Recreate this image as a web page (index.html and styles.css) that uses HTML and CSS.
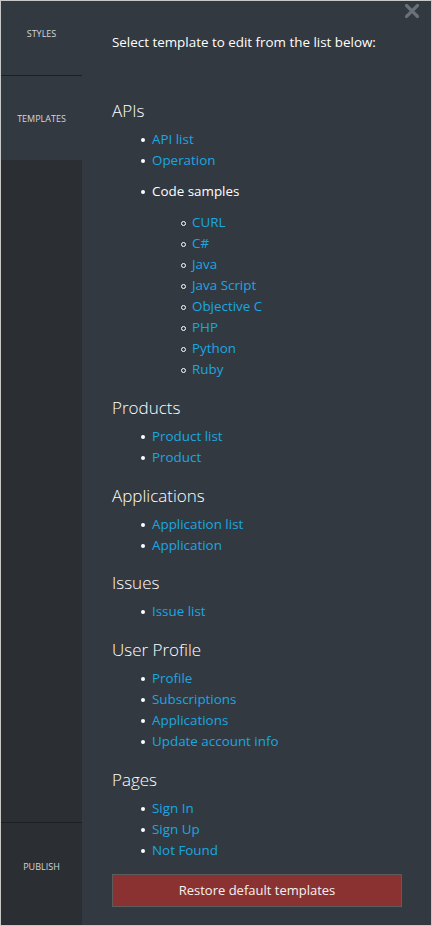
FILE: index.html
```html
<!DOCTYPE html>
<html>
<head>
<meta charset="utf-8">
<link rel="stylesheet" href="styles.css">
</head>
<body>
<div class="frame">
  <nav class="sidebar">
    <div class="tab tab-styles">STYLES</div>
    <div class="tab tab-templates">TEMPLATES</div>
    <div class="filler"></div>
    <div class="tab tab-publish">PUBLISH</div>
  </nav>
  <main class="main">
    <button class="close" aria-label="Close">
      <svg width="14" height="14" viewBox="0 0 14 14"><path d="M1.5 1.5 L12.5 12.5 M12.5 1.5 L1.5 12.5" stroke="#6b717a" stroke-width="3.2" stroke-linecap="square"/></svg>
    </button>
    <p class="intro">Select template to edit from the list below:</p>

    <h2 class="first">APIs</h2>
    <ul>
      <li><a href="#">API list</a></li>
      <li><a href="#">Operation</a></li>
      <li class="group">Code samples
        <ul class="sub">
          <li><a href="#">CURL</a></li>
          <li><a href="#">C#</a></li>
          <li><a href="#">Java</a></li>
          <li><a href="#">Java Script</a></li>
          <li><a href="#">Objective C</a></li>
          <li><a href="#">PHP</a></li>
          <li><a href="#">Python</a></li>
          <li><a href="#">Ruby</a></li>
        </ul>
      </li>
    </ul>

    <h2>Products</h2>
    <ul>
      <li><a href="#">Product list</a></li>
      <li><a href="#">Product</a></li>
    </ul>

    <h2>Applications</h2>
    <ul>
      <li><a href="#">Application list</a></li>
      <li><a href="#">Application</a></li>
    </ul>

    <h2>Issues</h2>
    <ul>
      <li><a href="#">Issue list</a></li>
    </ul>

    <h2>User Profile</h2>
    <ul>
      <li><a href="#">Profile</a></li>
      <li><a href="#">Subscriptions</a></li>
      <li><a href="#">Applications</a></li>
      <li><a href="#">Update account info</a></li>
    </ul>

    <h2>Pages</h2>
    <ul>
      <li><a href="#">Sign In</a></li>
      <li><a href="#">Sign Up</a></li>
      <li><a href="#">Not Found</a></li>
    </ul>

    <button class="restore">Restore default templates</button>
  </main>
</div>
</body>
</html>
```
FILE: styles.css
```css
html, body {
  margin: 0;
  padding: 0;
}
body {
  font-family: "Open Sans", "Liberation Sans", sans-serif;
  background: #ffffff;
}
.frame {
  box-sizing: border-box;
  width: 432px;
  height: 926px;
  border: 1px solid #c8c8c8;
  display: flex;
  background: #333941;
  overflow: hidden;
}
.sidebar {
  width: 81px;
  flex: none;
  display: flex;
  flex-direction: column;
}
.tab {
  display: flex;
  align-items: center;
  justify-content: center;
  font-size: 9px;
  color: #d4d6d9;
}
.tab-styles {
  height: 75px;
  padding-bottom: 10px;
  box-sizing: border-box;
  border-bottom: 1px solid #1c1f23;
}
.tab-templates {
  height: 84px;
  padding-top: 1px;
  box-sizing: border-box;
}
.filler {
  flex: 1;
  background: #2b2e33;
}
.tab-publish {
  height: 103px;
  box-sizing: border-box;
  background: #2b2e33;
  border-top: 1px solid #1c1f23;
  padding-bottom: 16px;
}
.main {
  flex: 1;
  position: relative;
  padding: 0 0 0 30px;
  color: #ffffff;
}
.close {
  position: absolute;
  top: 3px;
  right: 12px;
  width: 14px;
  height: 14px;
  padding: 0;
  border: 0;
  background: none;
  display: block;
}
.close svg {
  display: block;
}
.intro {
  margin: 31px 0 0 0;
  font-size: 13.4px;
  line-height: 21px;
  color: #ffffff;
}
h2 {
  margin: 15.75px 0 6px 0;
  font-size: 17px;
  font-weight: 300;
  line-height: 24px;
  color: #ffffff;
}
h2.first {
  margin-top: 46px;
}
ul {
  margin: 0;
  padding: 0 0 0 40px;
  list-style: none;
}
li {
  position: relative;
  font-size: 13.4px;
  line-height: 21px;
  color: #ffffff;
}
li::before {
  content: "";
  position: absolute;
  left: -11px;
  top: 9px;
  width: 4px;
  height: 4px;
  border-radius: 50%;
  background: #ffffff;
}
.sub li::before {
  background: transparent;
  border: 1px solid #ffffff;
  width: 3px;
  height: 3px;
  top: 8.5px;
}
li.group {
  margin-top: 10px;
}
.sub {
  margin-top: 10px;
}
a {
  color: #1aa7e0;
  text-decoration: none;
}
.restore {
  display: block;
  margin: 13px 0 0 0;
  width: 290px;
  height: 33px;
  box-sizing: border-box;
  background: #8a3232;
  border: 1px solid #5c5c5c;
  color: #f2f2f2;
  font-family: "Open Sans", "Liberation Sans", sans-serif;
  font-size: 13px;
  padding: 0;
}
```
